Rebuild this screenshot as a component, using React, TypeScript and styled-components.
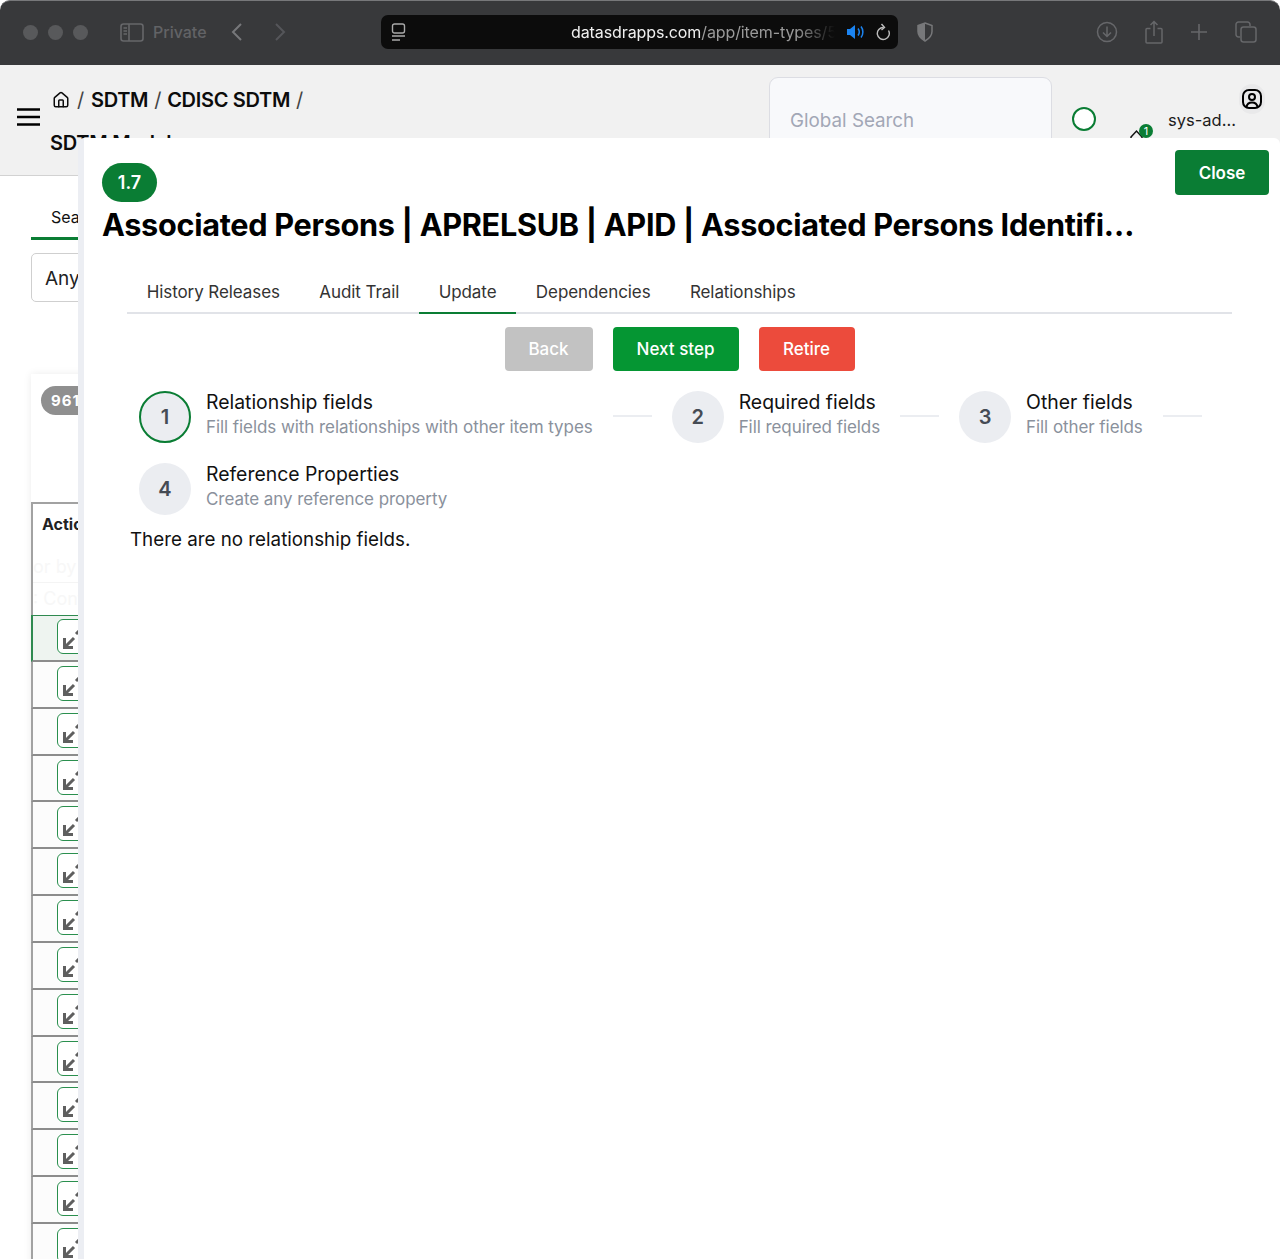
import styled, { createGlobalStyle } from "styled-components"
import { Home } from "lucide-react"

const GlobalStyle = createGlobalStyle`
  html, body {
    margin: 0;
    padding: 0;
    background: #fff;
    font-family: Inter, "Liberation Sans", sans-serif;
  }
  * { box-sizing: border-box; }
`

const Page = styled.div`
  position: relative;
  width: 1280px;
  height: 1259px;
  overflow: hidden;
  background: #fff;
`

/* safari chrome */
const BrowserBar = styled.div`
  height: 65px;
  background: #38393b;
  border-top: 1px solid #77787a;
  border-radius: 10px 10px 0 0;
  display: flex;
  align-items: center;
  padding: 0 23px 2px 23px;
  color: #66676a;
`

const TrafficLights = styled.div`
  display: flex;
  gap: 10px;
  margin-right: 32px;
`

const Light = styled.span`
  width: 15px;
  height: 15px;
  border-radius: 50%;
  background: #58595b;
`

const PrivateLabel = styled.span`
  font-size: 16px;
  font-weight: 500;
  margin-left: 9px;
  width: 65px;
  color: #626366;
`

const NavIcons = styled.div`
  display: flex;
  gap: 29px;
  width: 72px;
  margin-left: 12px;
`

const AddressBar = styled.div`
  width: 517px;
  height: 34px;
  background: #0c0c0c;
  border-radius: 7px;
  display: flex;
  align-items: center;
  padding: 0 7px 0 10px;
  margin-left: 79px;
`

const Url = styled.div`
  font-size: 16px;
  color: #f0f0f0;
  margin-left: 165px;
  width: 275px;
  white-space: nowrap;
  letter-spacing: -0.1px;
  -webkit-mask-image: linear-gradient(90deg, #000 82%, transparent 96%);
`

const UrlDim = styled.span`
  color: #9a9a9a;
`

const ReloadSlot = styled.span`
  display: flex;
  margin-left: 8px;
`

const ShieldSlot = styled.span`
  display: flex;
  margin-left: 19px;
`

const ToolIcons = styled.div`
  display: flex;
  align-items: center;
  gap: 27px;
  margin-left: auto;
`

/* app header behind the drawer */
const Header = styled.div`
  height: 111px;
  background: #f1f1f1;
  border-bottom: 1px solid #d2d2d2;
  display: flex;
  padding-left: 17px;
  overflow: hidden;
`

const MenuSlot = styled.div`
  width: 33px;
  padding-top: 43px;
  color: #000;
`

const Crumbs = styled.div`
  width: 340px;
  padding-top: 22px;
  font-size: 20px;
  font-weight: 600;
  color: #0c0c0c;
`

const CrumbRow = styled.div`
  display: flex;
  align-items: center;
  height: 25px;
  gap: 6px;
  padding-left: 2px;
  white-space: nowrap;
  letter-spacing: -0.3px;
`

const HomeIcon = styled(Home)`
  margin-right: 1px;
`

const CrumbSlash = styled.span<{ $lead?: boolean }>`
  font-weight: 400;
  color: #444;
  margin-right: ${(p) => (p.$lead ? "1px" : "0")};
`

const CrumbSecond = styled.div`
  margin-top: 19px;
  letter-spacing: -0.25px;
`

const SearchBox = styled.div`
  width: 283px;
  height: 100px;
  margin: 12px 0 0 379px;
  background: #f8f9fb;
  border: 1px solid #dcdde3;
  border-radius: 9px;
  padding: 31px 20px;
  font-size: 18.8px;
  color: #a2a7b6;
  flex-shrink: 0;
`

const StatusRing = styled.div`
  width: 24px;
  height: 24px;
  margin: 42px 0 0 20px;
  background: #fff;
  border: 2.5px solid #0a7d34;
  border-radius: 50%;
  flex-shrink: 0;
`

const BellSlot = styled.div`
  position: relative;
  width: 20px;
  height: 30px;
  margin: 59px 0 0 34px;
  flex-shrink: 0;
`

const BellBadge = styled.span`
  position: absolute;
  top: 0;
  left: 9px;
  width: 14px;
  height: 14px;
  border-radius: 50%;
  background: #0a7d34;
  color: #fff;
  font-size: 11px;
  line-height: 14px;
  text-align: center;
`

const UserColumn = styled.div`
  margin: 19px 0 0 18px;
  width: 80px;
  display: flex;
  flex-direction: column;
  font-size: 16.5px;
  color: #1b1b1b;
`

const Avatar = styled.div`
  width: 26px;
  height: 30px;
  margin-left: 71px;
  border-radius: 13px;
  background: #e9e9ea;
  display: flex;
  align-items: center;
  justify-content: center;
`

const UserName = styled.span`
  margin-top: -4px;
  white-space: nowrap;
`

/* list page mostly hidden by the drawer */
const ListPage = styled.div`
  padding: 0 0 0 31px;
  height: 1083px;
  overflow: hidden;
`

const SearchTab = styled.div`
  width: 60px;
  height: 64px;
  padding: 31px 0 0 20px;
  border-bottom: 3px solid #0a7d34;
  font-size: 16px;
  color: #111;
  white-space: nowrap;
`

const AnySelect = styled.div`
  width: 70px;
  height: 49px;
  margin-top: 13px;
  border: 1px solid #cfcfcf;
  border-radius: 5px;
  padding: 13px 13px;
  font-size: 19px;
  color: #222;
  white-space: nowrap;
`

const TableCard = styled.div`
  margin-top: 72px;
  height: 900px;
  box-shadow: 0 0 8px rgba(0, 0, 0, 0.08);
  padding-top: 12px;
`

const CountPill = styled.span`
  display: block;
  margin-left: 10px;
  width: 60px;
  height: 29px;
  border-radius: 15px;
  background: #8f8f8f;
  color: #fff;
  font-size: 15px;
  font-weight: 700;
  line-height: 29px;
  padding-left: 10px;
  letter-spacing: 1px;
  white-space: nowrap;
`

const TableHead = styled.div`
  margin-top: 87px;
  height: 113px;
  border-top: 2px solid #a2a2a2;
  border-left: 2px solid #a2a2a2;
  overflow: hidden;
`

const HeadLabel = styled.div`
  padding: 10px 0 0 9px;
  height: 47px;
  font-size: 16px;
  font-weight: 700;
  color: #222;
  white-space: nowrap;
`

const FilterCell = styled.div<{ $lined?: boolean }>`
  height: 32px;
  padding-top: 5px;
  font-size: 18px;
  color: #f7f7f7;
  white-space: nowrap;
  border-bottom: ${(p) => (p.$lined ? "1px solid #f4f4f4" : "none")};
`

const Row = styled.div<{ $active?: boolean }>`
  height: 46.85px;
  border-bottom: 2px solid #8c8c8c;
  border-left: 2px solid ${(p) => (p.$active ? "#2f8a50" : "#a2a2a2")};
  background: ${(p) => (p.$active ? "#eef4f0" : "#fcfcfc")};
  box-shadow: ${(p) => (p.$active ? "inset 0 1px #2f8a50" : "none")};
  padding: 4px 0 0 24px;
`

const ExpandButton = styled.div`
  width: 40px;
  height: 35px;
  border: 1px solid #2a8f4e;
  border-radius: 6px;
  background: #fff;
  padding: 10px 0 0 3px;
`

/* drawer */
const Drawer = styled.div`
  position: absolute;
  top: 138px;
  left: 78px;
  right: 0;
  bottom: 0;
  background: #fff;
  border-left: 6px solid #eceef3;
  border-radius: 6px 6px 0 0;
  padding: 25px 48px 0 18px;
`

const CloseButton = styled.button`
  position: absolute;
  top: 12px;
  right: 11px;
  width: 94px;
  height: 45px;
  border: none;
  border-radius: 4px;
  background: #0a7d34;
  color: #fff;
  font: 600 17px Inter, sans-serif;
`

const VersionPill = styled.div`
  width: 55px;
  height: 39px;
  border-radius: 20px;
  background: #0a7d34;
  color: #fff;
  font-size: 18px;
  font-weight: 600;
  display: flex;
  align-items: center;
  justify-content: center;
`

const Title = styled.h1`
  margin: 1px 0 0;
  font-size: 30.65px;
  line-height: 44px;
  font-weight: 700;
  color: #000;
  white-space: nowrap;
  letter-spacing: -0.3px;
`

const Body = styled.div`
  margin-top: 24px;
  padding-left: 25px;
`

const Tabs = styled.div`
  display: flex;
  border-bottom: 2px solid #e1e3e8;
  height: 43px;
`

const Tab = styled.div<{ $active?: boolean }>`
  padding: 11px 19.7px 0;
  height: 43px;
  font-size: 17px;
  line-height: 20px;
  letter-spacing: -0.08px;
  color: #333;
  white-space: nowrap;
  border-bottom: 2px solid ${(p) => (p.$active ? "#0a7d34" : "transparent")};
`

const Actions = styled.div`
  display: flex;
  justify-content: center;
  gap: 20px;
  margin-top: 13px;
`

const ActionButton = styled.button<{ $bg: string; $width: number }>`
  width: ${(p) => p.$width}px;
  height: 44px;
  border: none;
  border-radius: 4px;
  background: ${(p) => p.$bg};
  color: #fff;
  font: 500 17px Inter, sans-serif;
`

const Steps = styled.div`
  display: flex;
  flex-wrap: wrap;
  margin-top: 20px;
  padding-left: 12px;
  row-gap: 20px;
`

const Step = styled.div`
  display: flex;
  align-items: center;
  height: 52px;
`

const StepCircle = styled.div<{ $current?: boolean }>`
  width: 52px;
  height: 52px;
  border-radius: 50%;
  background: #ebedf1;
  border: ${(p) => (p.$current ? "2.5px solid #0a7d34" : "none")};
  color: #454b54;
  font-size: 20px;
  font-weight: 600;
  display: flex;
  align-items: center;
  justify-content: center;
  flex-shrink: 0;
`

const StepText = styled.div`
  margin-left: 15px;
  padding-bottom: 5px;
  display: flex;
  flex-direction: column;
  white-space: nowrap;
`

const StepTitle = styled.div`
  font-size: 19.4px;
  line-height: 25px;
  color: #111;
`

const StepHint = styled.div`
  font-size: 17px;
  line-height: 25px;
  letter-spacing: -0.07px;
  color: #8a919c;
`

const StepLine = styled.div`
  width: 39px;
  height: 2px;
  background: #ebedf1;
  margin: 0 20px 2px;
`

const EmptyNote = styled.p`
  margin: 12px 0 0 3px;
  font-size: 18.8px;
  line-height: 26px;
  color: #111;
`

const stepList = [
  { n: 1, title: "Relationship fields", hint: "Fill fields with relationships with other item types", line: true },
  { n: 2, title: "Required fields", hint: "Fill required fields", line: true },
  { n: 3, title: "Other fields", hint: "Fill other fields", line: true },
  { n: 4, title: "Reference Properties", hint: "Create any reference property", line: false },
]

const tabNames = ["History Releases", "Audit Trail", "Update", "Dependencies", "Relationships"]

const rowKeys = Array.from({ length: 14 }, (_, i) => i)

const SidebarIcon = () => (
  <svg width="24" height="19" viewBox="0 0 24 19" fill="none" stroke="#66676a" strokeWidth="1.6">
    <rect x="1" y="1" width="22" height="17" rx="2.5" />
    <path d="M9 1v17M3.5 5H7M3.5 8H7M3.5 11H7" />
  </svg>
)

const Chevron = ({ flip }: { flip?: boolean }) => (
  <svg width="14" height="20" viewBox="0 0 14 20" fill="none" stroke={flip ? "#55565a" : "#77787b"} strokeWidth="2">
    <path d={flip ? "M3 2l8 8-8 8" : "M11 2l-8 8 8 8"} />
  </svg>
)

const TabIcon = () => (
  <svg width="15" height="19" viewBox="0 0 15 19" fill="none" stroke="#a9a9a9" strokeWidth="1.4">
    <rect x="1.5" y="1" width="12" height="9" rx="2" />
    <path d="M1 13h13M1 17h8" />
  </svg>
)

const Speaker = () => (
  <svg width="20" height="16" viewBox="0 0 20 16">
    <path d="M1 5h3l5-4v14l-5-4H1z" fill="#1b84f2" />
    <path d="M12 4.5c1.500 2 1.500 5 0 7M15 2.500c2.500 3 2.500 8 0 11" fill="none" stroke="#1b84f2" strokeWidth="1.5" />
  </svg>
)

const Reload = () => (
  <svg width="16" height="19" viewBox="0 0 16 19" fill="none" stroke="#bdbdbd" strokeWidth="1.4">
    <path d="M9.500 4.500a6 6 0 1 0 5 3" />
    <path d="M7.500 1l3 3.500-3 2.500" />
  </svg>
)

const Shield = () => (
  <svg width="16" height="20" viewBox="0 0 16 20">
    <path d="M8 1l7 2.500v6c0 4.500-3.500 7.500-7 9.500-3.500-2-7-5-7-9.500v-6z" fill="none" stroke="#77787a" strokeWidth="1.5" />
    <path d="M8 1L1 3.500v6c0 4.500 3.500 7.500 7 9.500z" fill="#77787a" />
  </svg>
)

const DownloadCircle = () => (
  <svg width="22" height="22" viewBox="0 0 22 22" fill="none" stroke="#66676a" strokeWidth="1.5">
    <circle cx="11" cy="11" r="9.500" />
    <path d="M11 5.500v10M7 11.500l4 4 4-4" />
  </svg>
)

const ShareIcon = () => (
  <svg width="18" height="24" viewBox="0 0 18 24" fill="none" stroke="#66676a" strokeWidth="1.5">
    <path d="M5.500 8.500H2a1 1 0 0 0-1 1V22a1 1 0 0 0 1 1h14a1 1 0 0 0 1-1V9.500a1 1 0 0 0-1-1h-3.500" />
    <path d="M9 16V1.500M5.500 5L9 1.500 12.500 5" />
  </svg>
)

const PlusIcon = () => (
  <svg width="18" height="18" viewBox="0 0 18 18" stroke="#66676a" strokeWidth="1.6">
    <path d="M9 1v16M1 9h16" />
  </svg>
)

const TabsIcon = () => (
  <svg width="22" height="22" viewBox="0 0 22 22" fill="none" stroke="#66676a" strokeWidth="1.5">
    <path d="M5 16H3.500A2.500 2.500 0 0 1 1 13.500v-10A2.500 2.500 0 0 1 3.500 1h9A2.500 2.500 0 0 1 15 3.500V5" />
    <rect x="6" y="6" width="15" height="15" rx="2.500" />
  </svg>
)

const Hamburger = () => (
  <svg width="23" height="18" viewBox="0 0 23 18" stroke="#000" strokeWidth="2.4" display="block">
    <path d="M0 1.500h23M0 9h23M0 16.500h23" />
  </svg>
)

const BellOutline = () => (
  <svg width="18" height="24" viewBox="0 0 18 24" fill="none" stroke="#111" strokeWidth="1.5">
    <path d="M1 13l5.500-6 5.500 6v10H1z" />
  </svg>
)

const UserBadge = () => (
  <svg width="22" height="22" viewBox="0 0 22 22" fill="none" stroke="#000" strokeWidth="2">
    <rect x="2" y="2" width="18" height="18" rx="6" />
    <circle cx="11" cy="9" r="3" />
    <path d="M5.500 19c.5-3 2.500-4.500 5.500-4.500s5 1.500 5.500 4.500" />
  </svg>
)

// both arrows of the expand icon, the drawer hides most of the upper one
const ExpandIcon = () => (
  <svg width="36" height="22" viewBox="0 0 36 22" fill="none" stroke="#5f5f5f" strokeWidth="3" display="block">
    <path d="M3.500 8v9.500H12M4 17l9-9" />
    <path d="M15 4l5-5" />
  </svg>
)

export default function App() {
  return (
    <Page>
      <GlobalStyle />
      <BrowserBar>
        <TrafficLights>
          <Light />
          <Light />
          <Light />
        </TrafficLights>
        <SidebarIcon />
        <PrivateLabel>Private</PrivateLabel>
        <NavIcons>
          <Chevron />
          <Chevron flip />
        </NavIcons>
        <AddressBar>
          <TabIcon />
          <Url>
            datasdrapps.com<UrlDim>/app/item-types/5</UrlDim>
          </Url>
          <Speaker />
          <ReloadSlot>
            <Reload />
          </ReloadSlot>
        </AddressBar>
        <ShieldSlot>
          <Shield />
        </ShieldSlot>
        <ToolIcons>
          <DownloadCircle />
          <ShareIcon />
          <PlusIcon />
          <TabsIcon />
        </ToolIcons>
      </BrowserBar>

      <Header>
        <MenuSlot>
          <Hamburger />
        </MenuSlot>
        <Crumbs>
          <CrumbRow>
            <HomeIcon size={18} strokeWidth={2} />
            <CrumbSlash $lead>/</CrumbSlash>
            SDTM
            <CrumbSlash>/</CrumbSlash>
            CDISC SDTM
            <CrumbSlash>/</CrumbSlash>
          </CrumbRow>
          <CrumbSecond>SDTM Model</CrumbSecond>
        </Crumbs>
        <SearchBox>Global Search</SearchBox>
        <StatusRing />
        <BellSlot>
          <BellOutline />
          <BellBadge>1</BellBadge>
        </BellSlot>
        <UserColumn>
          <Avatar>
            <UserBadge />
          </Avatar>
          <UserName>sys-ad...</UserName>
        </UserColumn>
      </Header>

      <ListPage>
        <SearchTab>Search</SearchTab>
        <AnySelect>Any</AnySelect>
        <TableCard>
          <CountPill>961</CountPill>
          <TableHead>
            <HeadLabel>Actions</HeadLabel>
            <FilterCell $lined>or by</FilterCell>
            <FilterCell>: Cont</FilterCell>
          </TableHead>
          {rowKeys.map((k) => (
            <Row key={k} $active={k === 0}>
              <ExpandButton>
                <ExpandIcon />
              </ExpandButton>
            </Row>
          ))}
        </TableCard>
      </ListPage>

      <Drawer>
        <CloseButton>Close</CloseButton>
        <VersionPill>1.7</VersionPill>
        <Title>Associated Persons | APRELSUB | APID | Associated Persons Identifi…</Title>
        <Body>
          <Tabs>
            {tabNames.map((t) => (
              <Tab key={t} $active={t === "Update"}>
                {t}
              </Tab>
            ))}
          </Tabs>
          <Actions>
            <ActionButton $bg="#c2c2c2" $width={88}>Back</ActionButton>
            <ActionButton $bg="#059633" $width={126}>Next step</ActionButton>
            <ActionButton $bg="#ec4b3c" $width={96}>Retire</ActionButton>
          </Actions>
          <Steps>
            {stepList.map((s) => (
              <Step key={s.n}>
                <StepCircle $current={s.n === 1}>{s.n}</StepCircle>
                <StepText>
                  <StepTitle>{s.title}</StepTitle>
                  <StepHint>{s.hint}</StepHint>
                </StepText>
                {s.line && <StepLine />}
              </Step>
            ))}
          </Steps>
          <EmptyNote>There are no relationship fields.</EmptyNote>
        </Body>
      </Drawer>
    </Page>
  )
}
